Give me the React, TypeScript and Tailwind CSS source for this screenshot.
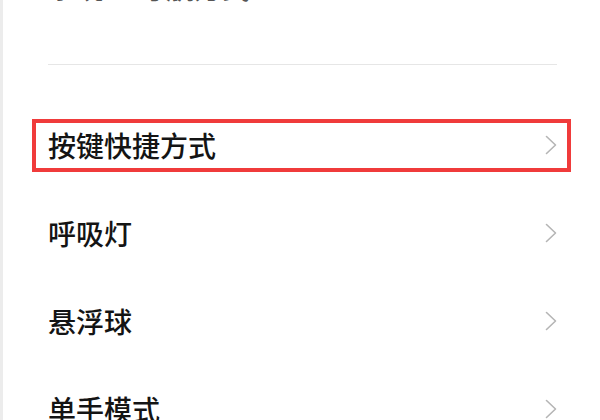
const rows = ['按键快捷方式', '呼吸灯', '悬浮球', '单手模式']

function Chevron() {
  return (
    <svg viewBox="0 0 12 20" className="h-[20px] w-[12px]" fill="none" aria-hidden="true">
      <path d="M1.5 1.5 L10.5 10 L1.5 18.5" stroke="#b5b5b5" strokeWidth="1.6" strokeLinecap="round" strokeLinejoin="round" />
    </svg>
  )
}

export default function App() {
  return (
    <div
      className="h-[420px] w-[600px] overflow-hidden border-l-[3px] border-[#ececec] bg-white"
      style={{ fontFamily: '"Noto Sans CJK SC", "Noto Sans", sans-serif' }}
    >
      <div className="flex h-[64px] items-start overflow-hidden pl-[45px] pr-[43px]">
        <div className="-mt-[33px] flex h-[40px] items-center gap-[34px] text-[28px] font-medium leading-none text-[#555555]">
          <span>系统</span>
          <span>导航方式</span>
        </div>
      </div>
      <div className="ml-[45px] mr-[43px] h-[1px] bg-[#e6e6e6]" />
      <div className="pt-[36px]">
        {rows.map((label, index) => (
          <div key={label} className="relative flex h-[88px] items-center justify-between pl-[45px] pr-[43px]">
            {index === 0 ? (
              <div className="pointer-events-none absolute left-[29px] right-[29px] top-[18px] h-[53px] border-[4px] border-[#f03b3b]" />
            ) : null}
            <span className="text-[28px] font-medium leading-none text-[#141414]">{label}</span>
            <Chevron />
          </div>
        ))}
      </div>
    </div>
  )
}
